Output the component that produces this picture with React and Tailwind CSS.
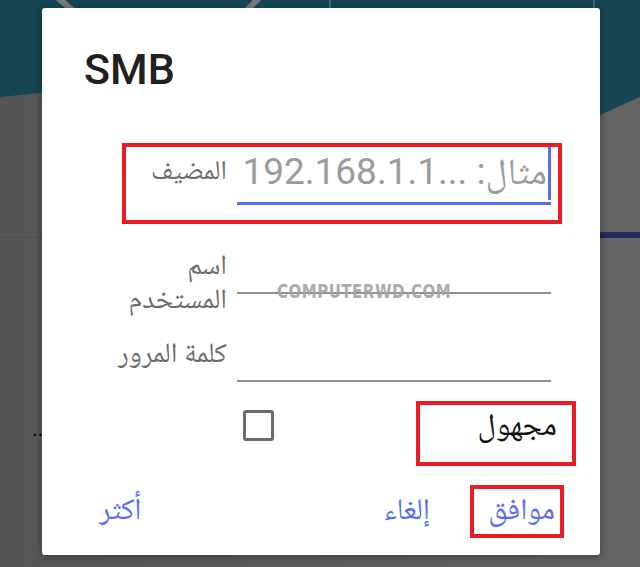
export default function App() {
  return (
    <div className="relative w-[640px] h-[567px] overflow-hidden bg-gradient-to-r from-[#565656] to-[#656565] [font-family:Roboto,'Noto_Naskh_Arabic','Noto_Sans_Arabic','DejaVu_Sans',sans-serif]">
      {/* dimmed app behind the dialog */}
      <svg className="absolute left-0 top-0" width="640" height="567" viewBox="0 0 640 567">
        <path d="M0 0 H640 V97 L600 115 C450 150 250 80 40 93 L0 97 Z" fill="#164654" />
        <path d="M58 -2 L72 10" stroke="#7a7a7a" strokeWidth="6" />
        <path d="M259 -2 L247 10" stroke="#7a7a7a" strokeWidth="6" />
        <path d="M330 0 V10" stroke="#7d8a8e" strokeWidth="1" />
        <path d="M594 0 V10" stroke="#7d8a8e" strokeWidth="1" />
      </svg>
      <div className="absolute left-0 top-[237px] w-[50px] h-px bg-[#4f4f4f]" />
      <div className="absolute left-[598px] top-[232px] w-[42px] h-[6px] bg-[#222a5c]" />
      <div className="absolute left-[32px] top-[419px] text-[20px] leading-[20px] text-black [font-family:'Liberation_Sans',sans-serif]">..</div>

      {/* dialog */}
      <div className="absolute left-[42px] top-[8px] w-[558px] h-[547px] bg-white rounded-[3px] shadow-[0_2px_8px_rgba(0,0,0,0.35)]">
        <div className="pl-[42px] pt-[40px] text-[43px] leading-[43px] font-medium text-[#212121]">SMB</div>

        <div className="ml-[84px] mr-[49px] mt-[52px]">
          {/* host row */}
          <div className="-ml-[4px] -mr-[11px] border-4 border-[#ed1c24] pr-[7px] h-[81px] flex">
            <div dir="rtl" className="w-[101px] pt-[5px] text-[27px] leading-[36px] text-[#6a6a6a] text-right whitespace-nowrap">المضيف</div>
            <div className="ml-[10px] w-[314px] flex flex-col">
              <div className="h-[53px] flex justify-end">
                <span dir="rtl" className="text-[37px] leading-[50px] text-[#9b9b9b] whitespace-nowrap">مثال: ...192.168.1.1</span>
                <div className="ml-[1px] w-[3px] h-[53px] bg-[#5a6ef2]" />
              </div>
              <div className="mt-[2px] h-[3px] bg-[#5a6ef2]" />
            </div>
          </div>

          {/* username row */}
          <div className="mt-[24px] flex items-start">
            <div dir="rtl" className="w-[101px] text-[28px] leading-[34px] text-[#6a6a6a] text-right whitespace-nowrap">
              اسم
              <br />
              المستخدم
            </div>
            <div className="ml-[10px] w-[314px] h-[46px] border-b-2 border-[#8f8f8f]" />
          </div>

          {/* password row */}
          <div className="mt-[20px] flex items-start">
            <div dir="rtl" className="w-[101px] text-[28px] leading-[34px] text-[#6a6a6a] text-right whitespace-nowrap">كلمة المرور</div>
            <div className="ml-[10px] w-[314px] h-[46px] border-b-2 border-[#8f8f8f]" />
          </div>

          {/* anonymous row */}
          <div className="mt-[19px] flex items-start">
            <div className="w-[111px]" />
            <div className="ml-[6px] mt-[9px] w-[31px] h-[31px] border-[3px] border-[#6b6b6b] rounded-[3px]" />
            <div className="flex-1" />
            <div className="-mr-[25px] w-[160px] h-[65px] border-4 border-[#ed1c24] flex justify-end pr-[15px]">
              <span dir="rtl" className="text-[31px] leading-[40px] text-[#111111] whitespace-nowrap">مجهول</span>
            </div>
          </div>
        </div>

        {/* buttons */}
        <div className="mt-[19px] pl-[57px] pr-[36px] flex items-start justify-between">
          <div dir="rtl" className="h-[46px] flex items-center text-[30px] text-[#5a6df3]">أكثر</div>
          <div className="flex items-start gap-[40px]">
            <div dir="rtl" className="h-[46px] flex items-center text-[30px] text-[#5a6df3]">إلغاء</div>
            <div dir="rtl" className="w-[94px] h-[53px] border-4 border-[#ed1c24] flex items-center justify-start pr-[5px] pb-[7px] text-[30px] text-[#5a6df3] whitespace-nowrap">موافق</div>
          </div>
        </div>
      </div>

      {/* watermark */}
      <div className="absolute left-[277px] top-[283px] text-[15px] leading-[14px] font-bold tracking-[0.5px] text-[#a3a3a3] opacity-90 [transform:scaleY(1.25)] origin-top [font-family:'DejaVu_Sans',sans-serif]">COMPUTERWD.COM</div>
    </div>
  );
}
